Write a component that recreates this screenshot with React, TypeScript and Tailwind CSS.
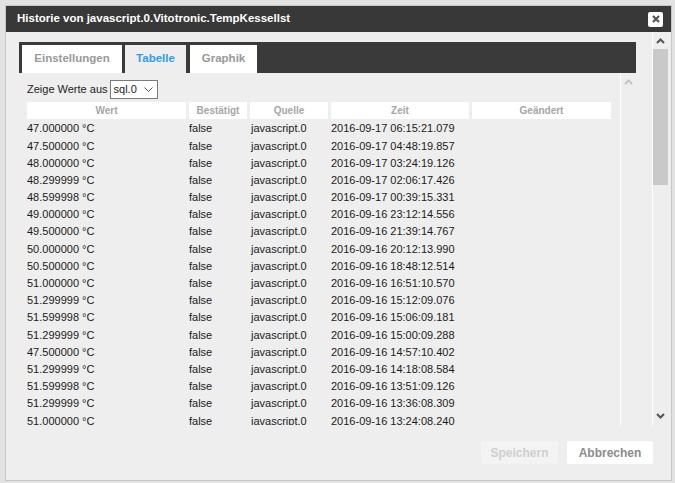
const rows: [string, string][] = [
  ["47.000000", "2016-09-17 06:15:21.079"],
  ["47.500000", "2016-09-17 04:48:19.857"],
  ["48.000000", "2016-09-17 03:24:19.126"],
  ["48.299999", "2016-09-17 02:06:17.426"],
  ["48.599998", "2016-09-17 00:39:15.331"],
  ["49.000000", "2016-09-16 23:12:14.556"],
  ["49.500000", "2016-09-16 21:39:14.767"],
  ["50.000000", "2016-09-16 20:12:13.990"],
  ["50.500000", "2016-09-16 18:48:12.514"],
  ["51.000000", "2016-09-16 16:51:10.570"],
  ["51.299999", "2016-09-16 15:12:09.076"],
  ["51.599998", "2016-09-16 15:06:09.181"],
  ["51.299999", "2016-09-16 15:00:09.288"],
  ["47.500000", "2016-09-16 14:57:10.402"],
  ["51.299999", "2016-09-16 14:18:08.584"],
  ["51.599998", "2016-09-16 13:51:09.126"],
  ["51.299999", "2016-09-16 13:36:08.309"],
  ["51.000000", "2016-09-16 13:24:08.240"],
];

function Chevron({ up, color }: { up?: boolean; color: string }) {
  return (
    <svg width="9" height="6" viewBox="0 0 9 6">
      <polyline
        points={up ? "1,5 4.5,1.5 8,5" : "1,1 4.5,4.5 8,1"}
        fill="none"
        stroke={color}
        strokeWidth="2"
      />
    </svg>
  );
}

export default function App() {
  return (
    <div className="w-[675px] h-[483px] bg-[#e2e2e2] pl-[5px] pt-[5px] font-['Liberation_Sans',Arial,sans-serif]">
      <div className="w-[667px] h-[476px] border border-[#c6c6c6] bg-[#eeeeee] flex flex-col">
        {/* title */}
        <div className="h-[26px] bg-[#383838] flex items-center justify-between pl-[11px] pr-[8px]">
          <span className="text-white font-bold text-[11.5px]">
            Historie von javascript.0.Vitotronic.TempKessellst
          </span>
          <div className="w-[15px] h-[15px] bg-white rounded-[2px] flex items-center justify-center">
            <svg width="8" height="8" viewBox="0 0 8 8">
              <path d="M1 1L7 7M7 1L1 7" stroke="#555" strokeWidth="2.2" />
            </svg>
          </div>
        </div>

        <div className="h-[393px] flex">
          <div className="w-[630px] pt-[10px] pl-[13px] flex flex-col">
            {/* tabs */}
            <div className="w-[617px] h-[31px] bg-[#3a3a3a] flex gap-[3px] pl-[3px] pt-[3px] text-[11.5px] font-bold">
              <div className="w-[100px] h-[28px] bg-white text-[#999] flex items-center justify-center">
                Einstellungen
              </div>
              <div className="w-[61px] h-[28px] bg-[#eeeeee] text-[#2e9cf2] flex items-center justify-center">
                Tabelle
              </div>
              <div className="w-[67px] h-[28px] ml-[1px] bg-white text-[#999] flex items-center justify-center">
                Graphik
              </div>
            </div>

            <div className="w-[617px] h-[352px] flex">
              <div className="w-[601px] overflow-hidden pl-[8px] pt-[7px]">
                <div className="h-[19px] flex items-center text-[11px] text-[#222]">
                  <span>Zeige Werte aus</span>
                  <div className="ml-[2px] w-[48px] h-[19px] border border-[#7a7a7a] bg-white flex items-center justify-between pl-[3px] pr-[4px]">
                    <span>sql.0</span>
                    <svg width="9" height="5" viewBox="0 0 9 5">
                      <polyline points="0.5,0.5 4.5,4.5 8.5,0.5" fill="none" stroke="#555" strokeWidth="1" />
                    </svg>
                  </div>
                </div>

                <div className="mt-[3px] h-[17px] flex gap-[3px] text-[10px] font-bold text-[#a6a6a6]">
                  <div className="w-[159px] bg-white flex items-center justify-center">Wert</div>
                  <div className="w-[58px] bg-white flex items-center justify-center">Bestätigt</div>
                  <div className="w-[78px] bg-white flex items-center justify-center">Quelle</div>
                  <div className="w-[138px] bg-white flex items-center justify-center">Zeit</div>
                  <div className="w-[139px] bg-white flex items-center justify-center">Geändert</div>
                </div>

                <div className="pt-[1px]">
                  {rows.map(([v, t], i) => (
                    <div key={i} className="h-[17.2px] flex gap-[3px] text-[11px] text-[#1a1a1a] items-center">
                      <div className="w-[159px]">{v} °C</div>
                      <div className="w-[58px]">false</div>
                      <div className="w-[78px] pl-[1px]">javascript.0</div>
                      <div className="w-[138px]">{t}</div>
                      <div className="w-[139px]"></div>
                    </div>
                  ))}
                </div>
              </div>
              <div className="w-[16px] border-l border-white flex justify-center pt-[6px]">
                <div className="h-[6px]">
                  <Chevron up color="#c4c4c4" />
                </div>
              </div>
            </div>
          </div>

          <div className="w-[16px] ml-[16px] border-l border-white flex flex-col items-center">
            <div className="h-[17px] flex items-center pt-[1px]">
              <Chevron up color="#555" />
            </div>
            <div className="w-[15px] h-[136px] bg-[#c9c9c9]" />
            <div className="flex-1" />
            <div className="h-[12px] flex items-start">
              <Chevron color="#555" />
            </div>
          </div>
        </div>

        <div className="flex justify-end gap-[9px] pt-[16px] pr-[18px] text-[12px] font-bold">
          <div className="w-[77px] h-[23px] bg-[#f3f3f3] text-[#cfcfcf] rounded-[2px] flex items-center justify-center">
            Speichern
          </div>
          <div className="w-[86px] h-[23px] bg-white text-[#8c8c8c] rounded-[2px] flex items-center justify-center">
            Abbrechen
          </div>
        </div>
      </div>
    </div>
  );
}
